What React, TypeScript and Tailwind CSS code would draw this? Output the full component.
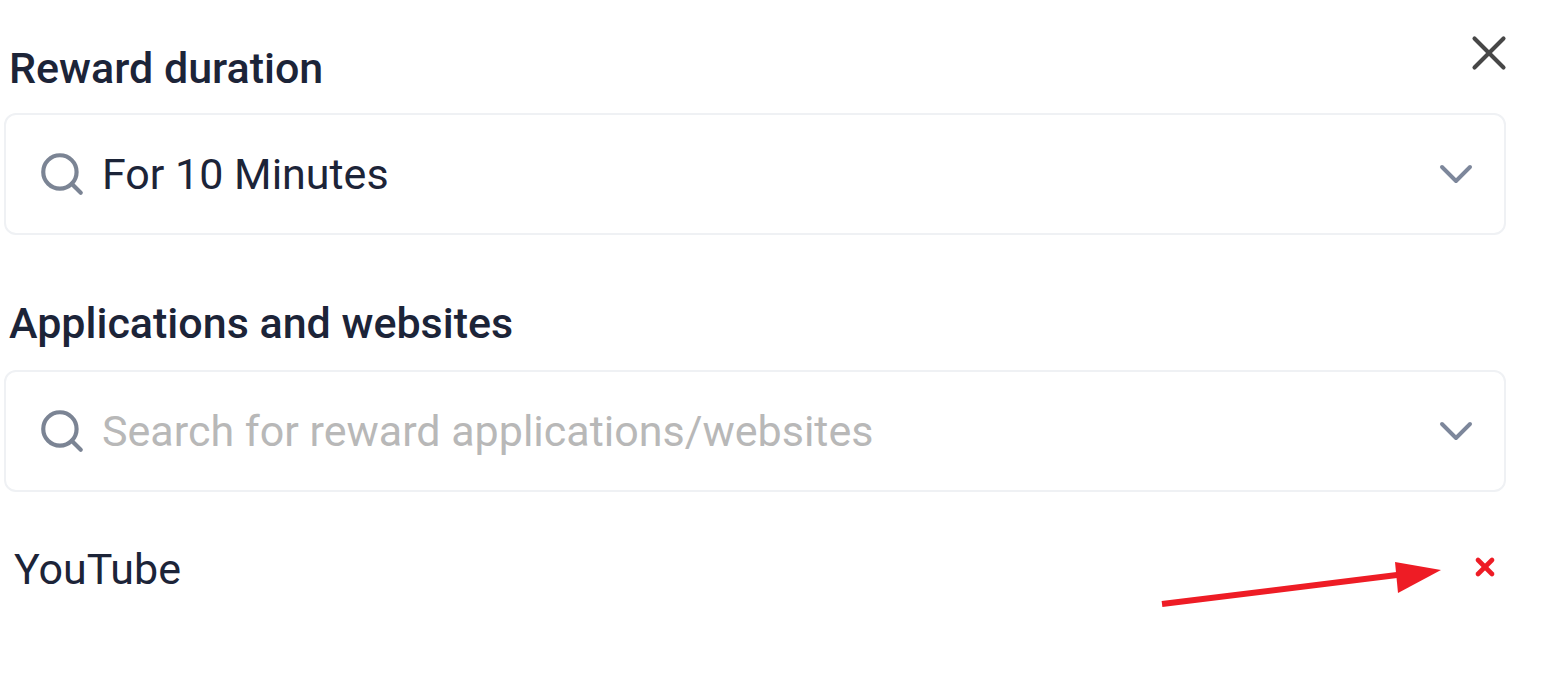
import React from "react";
import { Search, ChevronDown, X } from "lucide-react";

const font = { fontFamily: "Roboto, 'Noto Sans', sans-serif" };

interface SelectBoxProps {
    value?: string;
    placeholder: string;
}

const SelectBox: React.FC<SelectBoxProps> = ({ value, placeholder }) => {
    return (
        <div className="flex items-center h-[122px] rounded-[12px] border-2 border-[#eff1f4] bg-white pl-[31px] pr-[20px]">
            <Search className="w-[50px] h-[50px] text-[#7b8494] shrink-0" strokeWidth={2} />
            <span
                className={
                    "ml-[15px] flex-1 text-[43px] leading-[50px] " +
                    (value ? "text-[#1c2438]" : "text-[#b8b8b8]")
                }
            >
                {value ?? placeholder}
            </span>
            <ChevronDown className="w-[56px] h-[56px] text-[#7d879b] shrink-0" strokeWidth={1.7} />
        </div>
    );
};

export default function App() {
    return (
        <div className="relative w-[1559px] h-[692px] bg-white overflow-hidden" style={font}>
            <div className="w-[1502px] ml-[4px] pt-[43px]">
                {/* Reward duration */}
                <div className="flex items-start justify-between">
                    <h2 className="pl-[5px] text-[43px] leading-[50px] font-medium text-[#1c2438]">
                        Reward duration
                    </h2>
                    <X className="w-[58px] h-[58px] mt-[-19px] mr-[-12px] text-[#474747]" strokeWidth={1.7} />
                </div>
                <div className="mt-[20px]">
                    <SelectBox value="For 10 Minutes" placeholder="" />
                </div>

                {/* Applications and websites */}
                <h2 className="mt-[63px] pl-[5px] text-[43px] leading-[50px] font-medium text-[#1c2438]">
                    Applications and websites
                </h2>
                <div className="mt-[22px]">
                    <SelectBox placeholder="Search for reward applications/websites" />
                </div>

                {/* Selected items */}
                <div className="mt-[53px] flex items-center justify-between pl-[10px] pr-[7px]">
                    <span className="text-[43px] leading-[48px] text-[#1c2438]">YouTube</span>
                    <X className="w-[28px] h-[28px] mb-[5px] text-[#ee1c25]" strokeWidth={4} />
                </div>
            </div>

            {/* annotation arrow */}
            <svg
                className="absolute left-0 top-0 pointer-events-none"
                width="1559"
                height="692"
                viewBox="0 0 1559 692"
            >
                <line x1="1162" y1="604" x2="1405" y2="574" stroke="#ee1c25" strokeWidth="6" />
                <polygon points="1395,562 1441,570 1398,593" fill="#ee1c25" />
            </svg>
        </div>
    );
}
